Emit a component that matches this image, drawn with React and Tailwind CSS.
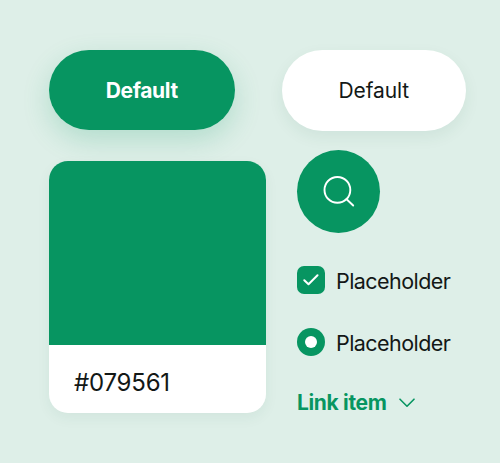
function SearchIcon() {
  return (
    <svg width="32" height="32" viewBox="0 0 32 32" fill="none" stroke="white" strokeWidth="1.9" strokeLinecap="round">
      <circle cx="14.4" cy="13.9" r="12.9" />
      <path d="M23.6 23.2L30.2 29.5" />
    </svg>
  );
}

function Option({ children }) {
  return (
    <div className="flex h-7 items-center gap-[11px]">
      {children}
      <span className="pt-px text-[21.5px] leading-7 tracking-[-0.55px]">Placeholder</span>
    </div>
  );
}

export default function App() {
  return (
    <main className="flex h-[463px] w-[500px] items-start gap-4 overflow-hidden bg-[#deefe8] pl-[49px] font-['Inter',sans-serif] text-[#131816]">
      <section className="flex w-[217px] flex-col items-start pt-[49.5px]">
        <button className="h-[80.5px] w-[185.5px] rounded-full bg-[#079561] pt-px text-[21px] font-bold tracking-[-0.35px] text-white shadow-[0_10px_28px_rgba(7,149,97,0.2)]">
          Default
        </button>
        <div className="mt-[30.5px] w-full overflow-hidden rounded-[19px] bg-white shadow-[0_5px_14px_rgba(20,80,60,0.06)]">
          <div className="h-[184px] bg-[#079561]" />
          <div className="flex h-[68.5px] items-center pt-2 pl-[25px] text-[24px] tracking-[-0.2px]">#079561</div>
        </div>
      </section>
      <section className="flex flex-col items-start pt-[50px]">
        <button className="h-[80.5px] w-[183.5px] rounded-full bg-white pt-px text-[21px] tracking-[-0.1px] shadow-[0_6px_16px_rgba(20,80,60,0.07)]">
          Default
        </button>
        <div className="mt-[19.5px] ml-[15px] flex flex-col items-start">
          <button className="flex size-[83px] items-center justify-center rounded-full bg-[#079561]" aria-label="Search">
            <SearchIcon />
          </button>
          <div className="mt-[33px]">
            <Option>
              <span className="flex size-7 items-center justify-center rounded-[7px] bg-[#079561]">
                <svg width="16" height="12" viewBox="0 0 16 12" fill="none" stroke="white" strokeWidth="2" strokeLinecap="round" strokeLinejoin="round">
                  <path d="M1.3 6.2L5.5 10.3L14.5 1.3" />
                </svg>
              </span>
            </Option>
          </div>
          <div className="mt-[34px]">
            <Option>
              <span className="flex size-7 items-center justify-center rounded-full bg-[#079561]">
                <span className="size-3 rounded-full bg-white" />
              </span>
            </Option>
          </div>
          <a className="mt-8 flex items-center gap-3 text-[#079561]">
            <span className="text-[21px] leading-[29px] font-bold tracking-[-0.35px]">Link item</span>
            <svg width="16" height="10" viewBox="0 0 16 10" fill="none" stroke="currentColor" strokeWidth="1.6" strokeLinecap="round" strokeLinejoin="round">
              <path d="M1 1.2L8 8.2L15 1.2" />
            </svg>
          </a>
        </div>
      </section>
    </main>
  );
}
